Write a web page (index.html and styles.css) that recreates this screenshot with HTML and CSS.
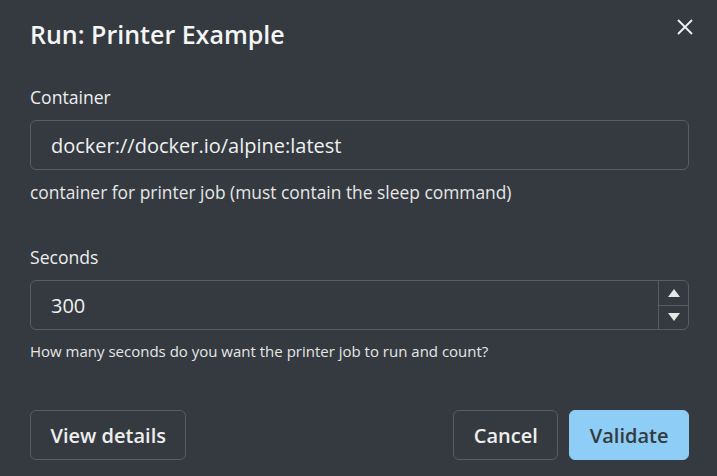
FILE: index.html
```html
<!DOCTYPE html>
<html lang="en">
<head>
<meta charset="utf-8">
<title>Run: Printer Example</title>
<link rel="stylesheet" href="styles.css">
</head>
<body>
<div class="dialog">
  <div class="header">
    <h1 class="title">Run: Printer Example</h1>
    <button class="close" aria-label="Close">
      <svg width="16" height="16" viewBox="0 0 16 16"><path d="M1 1L15 15M15 1L1 15" stroke="#f2f2f2" stroke-width="1.8" fill="none"/></svg>
    </button>
  </div>
  <div class="field">
    <label class="label">Container</label>
    <div class="input">docker://docker.io/alpine:latest</div>
    <div class="help">container for printer job (must contain the sleep command)</div>
  </div>
  <div class="field field-seconds">
    <label class="label">Seconds</label>
    <div class="input number">
      <span class="value">300</span>
      <span class="spin">
        <span class="spin-btn"><svg width="14" height="10" viewBox="0 0 14 10"><path d="M7 1L13 9H1Z" fill="#e6e6e6"/></svg></span>
        <span class="spin-btn"><svg width="14" height="10" viewBox="0 0 14 10"><path d="M1 1H13L7 9Z" fill="#e6e6e6"/></svg></span>
      </span>
    </div>
    <div class="help small">How many seconds do you want the printer job to run and count?</div>
  </div>
  <div class="footer">
    <button class="btn">View details</button>
    <div class="right">
      <button class="btn">Cancel</button>
      <button class="btn primary">Validate</button>
    </div>
  </div>
</div>
</body>
</html>
```
FILE: styles.css
```css
html, body {
  margin: 0;
  padding: 0;
  background: #343a40;
  height: 100%;
}
body {
  font-family: "Open Sans", "Noto Sans", sans-serif;
  color: #eeeeee;
}
.dialog {
  padding: 18px 28px 0 30px;
}
.header {
  display: flex;
  justify-content: space-between;
  align-items: flex-start;
  height: 33px;
}
.title {
  margin: 0;
  font-size: 25px;
  line-height: 32px;
  font-weight: 600;
  color: #f5f5f5;
}
.close {
  background: none;
  border: 0;
  padding: 0;
  margin: 1px -4px 0 0;
  display: flex;
  cursor: pointer;
}
.field {
  margin-top: 34px;
  display: flex;
  flex-direction: column;
}
.field-seconds {
  margin-top: 41px;
}
.label {
  font-size: 17.6px;
  line-height: 24px;
  color: #eeeeee;
  margin-bottom: 11px;
}
.input {
  height: 48px;
  border: 1px solid #575d64;
  border-radius: 6px;
  padding: 0 20px;
  display: flex;
  align-items: center;
  font-size: 20px;
  color: #f0f0f0;
}
.number {
  padding-right: 0;
  justify-content: space-between;
}
.spin {
  display: flex;
  flex-direction: column;
  width: 29px;
  height: 100%;
  border-left: 1px solid #575d64;
}
.spin-btn {
  flex: 1;
  display: flex;
  align-items: center;
  justify-content: center;
}
.spin-btn + .spin-btn {
  border-top: 1px solid #575d64;
}
.help {
  margin-top: 10px;
  font-size: 17.4px;
  line-height: 24px;
  color: #e6e6e6;
}
.help.small {
  margin-top: 11px;
  font-size: 15px;
  line-height: 20px;
}
.footer {
  margin-top: 49px;
  display: flex;
  justify-content: space-between;
}
.right {
  display: flex;
  gap: 11px;
}
.btn {
  height: 50px;
  padding: 0 19.5px;
  border: 1px solid #575d64;
  border-radius: 6px;
  background: transparent;
  color: #eeeeee;
  font-family: "Open Sans", "Noto Sans", sans-serif;
  font-size: 20px;
  font-weight: 600;
}
.btn.primary {
  background: #8ecdf5;
  border-color: #8ecdf5;
  color: #343a40;
}
```
